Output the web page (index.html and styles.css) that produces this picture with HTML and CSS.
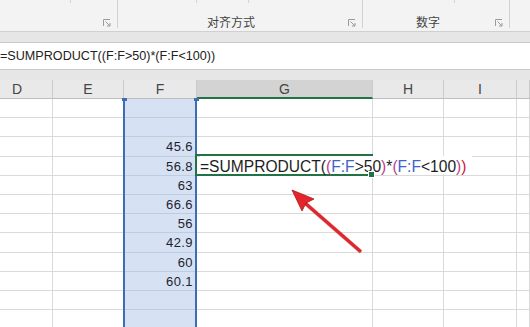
FILE: index.html
```html
<!DOCTYPE html>
<html lang="zh">
<head>
  <meta charset="UTF-8">
  <title>SUMPRODUCT</title>
  <link rel="stylesheet" href="styles.css">
</head>
<body>
  <div class="ribbon">
    <span class="tick" style="left: 70px"></span>
    <span class="tick" style="left: 196px"></span>
    <span class="tick" style="left: 248px"></span>
    <span class="tick" style="left: 454px"></span>
    <div class="group g1">
      <svg class="launcher" width="8" height="8" viewBox="0 0 8 8"><path d="M0.5 7V0.5H7" fill="none" stroke="#9a9a9a"/><path d="M2.5 2.5L7 7M7 4V7H4" fill="none" stroke="#9a9a9a"/></svg>
    </div>
    <div class="group g2">
      <span class="label">对齐方式</span>
      <svg class="launcher" width="8" height="8" viewBox="0 0 8 8"><path d="M0.5 7V0.5H7" fill="none" stroke="#9a9a9a"/><path d="M2.5 2.5L7 7M7 4V7H4" fill="none" stroke="#9a9a9a"/></svg>
    </div>
    <div class="group g3">
      <span class="label">数字</span>
      <svg class="launcher" width="8" height="8" viewBox="0 0 8 8"><path d="M0.5 7V0.5H7" fill="none" stroke="#9a9a9a"/><path d="M2.5 2.5L7 7M7 4V7H4" fill="none" stroke="#9a9a9a"/></svg>
    </div>
    <div class="group g4"></div>
  </div>
  <div class="band"></div>
  <div class="fbar">=SUMPRODUCT((F:F&gt;50)*(F:F&lt;100))</div>
  <div class="band low"></div>

  <div class="sheet">
    <div class="grid">
      <div class="hd first">D</div>
      <div class="hd">E</div>
      <div class="hd">F</div>
      <div class="hd active">G</div>
      <div class="hd">H</div>
      <div class="hd">I</div>
      <div class="hd"></div>
    </div>
    <div id="rows"></div>

    <div class="selection">
      <span class="handle left"></span>
      <span class="handle right"></span>
    </div>

    <div class="editor">
      <span class="editor-text">=SUMPRODUCT(<span class="p">(</span><span class="ref">F:F</span>&gt;50<span class="p">)</span>*<span class="p">(</span><span class="ref">F:F</span>&lt;100<span class="p">)</span><span class="p2">)</span></span>
      <span class="fill"></span>
    </div>
  </div>

  <svg class="arrow" width="530" height="327" viewBox="0 0 530 327">
    <line x1="361" y1="252" x2="306" y2="204" stroke="#7a1010" stroke-opacity="0.35" stroke-width="4"/>
    <line x1="360" y1="251" x2="305" y2="203" stroke="#e3262b" stroke-width="3" stroke-linecap="round"/>
    <polygon points="292,190 314,199 306,203 302,211" fill="#e3262b" stroke="#a81a1e" stroke-width="0.8"/>
  </svg>

  <script>
    const rows = document.getElementById("rows");
    const values = ["", "", "45.6", "56.8", "63", "66.6", "56", "42.9", "60", "60.1", "", ""];

    values.forEach(v => {
      const row = document.createElement("div");
      row.className = "grid row";
      for (let c = 0; c < 7; c++) {
        const cell = document.createElement("div");
        cell.className = "cell";
        if (c === 2) {
          cell.classList.add("sel");
          cell.textContent = v;
        }
        row.appendChild(cell);
      }
      rows.appendChild(row);
    });
  </script>
</body>
</html>
```

FILE: styles.css
```css
body {
  margin: 0;
  overflow: hidden;
  width: 530px;
  height: 327px;
  background: #fff;
  font-family: "Liberation Sans", Arial, sans-serif;
  color: #1e1e1e;
}

.ribbon {
  position: relative;
  display: flex;
  height: 31px;
  background: #f3f3f3;
  border-bottom: 1px solid #d0d0d0;
}
.tick {
  position: absolute;
  top: 0;
  width: 1px;
  height: 3px;
  background: #d4d4d4;
}
.group {
  position: relative;
  display: flex;
  align-items: center;
  justify-content: center;
  height: 28px;
  border-right: 1px solid #d2d2d2;
  box-sizing: border-box;
}
.g1 { width: 118px; }
.g2 { width: 245px; padding-right: 18px; }
.g3 { width: 147px; padding-right: 16px; }
.g4 { flex: 1; border-right: none; }
.label {
  font-family: "Noto Sans CJK SC", sans-serif;
  font-size: 12px;
  color: #444;
  padding-top: 14px;
}
.launcher {
  position: absolute;
  right: 6px;
  top: 19px;
}

.band {
  height: 10px;
  background: #e6e6e6;
  border-bottom: 1px solid #c9c9c9;
}
.band.low {
  border-bottom: none;
}
.fbar {
  height: 26px;
  line-height: 26px;
  background: #fff;
  border-bottom: 1px solid #c9c9c9;
  font-size: 12.6px;
  color: #222;
  white-space: nowrap;
}

.sheet {
  position: relative;
}
.grid {
  display: grid;
  grid-template-columns: 53px 71px 73px 176px 71px 73px 1fr;
}
.hd {
  height: 19px;
  box-sizing: border-box;
  background: #e9e9e9;
  border-bottom: 1px solid #bdbdbd;
  border-right: 1px solid #cacaca;
  text-align: center;
  font-size: 14px;
  line-height: 18px;
  color: #454545;
}
.hd.first {
  padding-right: 18px;
}
.hd.active {
  background: #d3d3d3;
  border-bottom: 2px solid #217346;
}
.cell {
  height: 19.2px;
  box-sizing: border-box;
  border-right: 1px solid #dadada;
  border-bottom: 1px solid #dadada;
}
.cell.sel {
  background: #d6e2f3;
  border-bottom-color: #bfcbde;
  text-align: right;
  padding-right: 3px;
  font-size: 13px;
  letter-spacing: 0.4px;
  line-height: 19px;
  color: #1e2230;
}

.selection {
  position: absolute;
  left: 123px;
  top: 19px;
  bottom: 0;
  width: 70px;
  border-left: 2px solid #3f6db4;
  border-right: 2px solid #3f6db4;
}
.handle {
  position: absolute;
  top: -1px;
  width: 5px;
  height: 3px;
  background: #3f6db4;
}
.handle.left { left: -3px; }
.handle.right { right: -4px; }

.editor {
  position: absolute;
  left: 195px;
  top: 74px;
  width: 174px;
  height: 18px;
  border: 2px solid #217346;
}
.editor-text {
  position: absolute;
  left: 3px;
  top: 0;
  height: 18px;
  line-height: 21px;
  padding-right: 5px;
  background: #fff;
  white-space: nowrap;
  font-size: 15.6px;
  color: #1e1e1e;
}
.ref { color: #3d65c6; }
.p { color: #b5428d; }
.p2 { color: #c8202f; }
.fill {
  position: absolute;
  right: -4px;
  bottom: -4px;
  width: 5px;
  height: 5px;
  background: #217346;
  border: 1px solid #fff;
}

.arrow {
  position: absolute;
  left: 0;
  top: 0;
  pointer-events: none;
}
```
